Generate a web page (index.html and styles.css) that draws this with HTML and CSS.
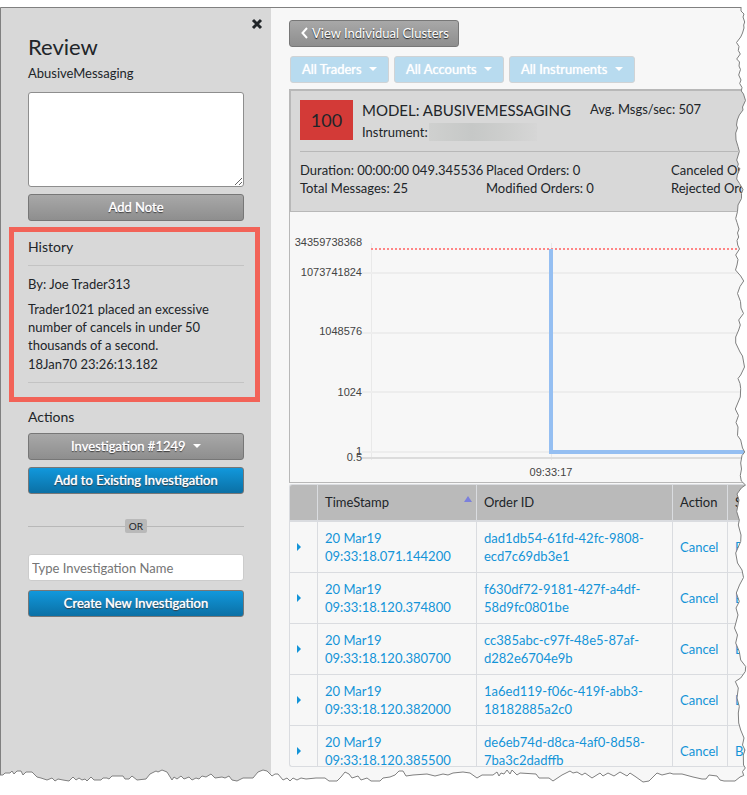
FILE: index.html
```html
<!DOCTYPE html>
<html lang="en">
<head>
<meta charset="utf-8">
<title>Review - AbusiveMessaging</title>
<link rel="stylesheet" href="styles.css">
</head>
<body>

<div class="sheet">

  <aside class="sidebar">
    <button class="close" aria-label="Close">
      <svg width="12" height="12" viewBox="0 0 12 12"><path d="M2 2 10 10M10 2 2 10" stroke="#212529" stroke-width="3"/></svg>
    </button>

    <h1>Review</h1>
    <p class="model-name">AbusiveMessaging</p>
    <textarea class="note" aria-label="Note"></textarea>
    <button class="btn btn-gray btn-block">Add Note</button>

    <section class="history">
      <h2>History</h2>
      <div class="entry">
        <p class="author">By: Joe Trader313</p>
        <p>Trader1021 placed an excessive number of cancels in under 50 thousands of a second.</p>
        <p class="stamp">18Jan70 23:26:13.182</p>
      </div>
    </section>

    <section class="actions">
      <h2>Actions</h2>
      <button class="btn btn-gray btn-block">Investigation #1249 <span class="caret"></span></button>
      <button class="btn btn-blue btn-block">Add to Existing Investigation</button>
      <div class="or"><span>OR</span></div>
      <input class="name-input" type="text" placeholder="Type Investigation Name" aria-label="Investigation name">
      <button class="btn btn-blue btn-block">Create New Investigation</button>
    </section>
  </aside>

  <main class="content">
    <button class="btn btn-gray btn-back">
      <svg width="7" height="12" viewBox="0 0 7 12"><path d="M6 1 1.5 6 6 11" fill="none" stroke="#fff" stroke-width="2"/></svg>
      View Individual Clusters
    </button>

    <div class="filters">
      <button class="btn btn-filter" disabled>All Traders <span class="caret"></span></button>
      <button class="btn btn-filter" disabled>All Accounts <span class="caret"></span></button>
      <button class="btn btn-filter" disabled>All Instruments <span class="caret"></span></button>
    </div>

    <section class="summary">
      <div class="summary-head">
        <div class="score">100</div>
        <div class="model">
          <h2>MODEL: ABUSIVEMESSAGING</h2>
          <p>Instrument:<span class="masked"></span></p>
        </div>
        <p class="rate">Avg. Msgs/sec: 507</p>
      </div>
      <div class="stats">
        <span>Duration: 00:00:00 049.345536</span>
        <span>Placed Orders: 0</span>
        <span>Canceled Orders: 0</span>
        <span>Total Messages: 25</span>
        <span>Modified Orders: 0</span>
        <span>Rejected Orders: 0</span>
      </div>
    </section>

    <div class="chart">
      <svg width="100%" height="270">
        <g class="grid">
          <path d="M81.5 31V248M261.5 31V248"/>
          <line x1="72" y1="61" x2="100%" y2="61"/>
          <line x1="72" y1="121" x2="100%" y2="121"/>
          <line x1="72" y1="180" x2="100%" y2="180"/>
          <line x1="72" y1="240" x2="100%" y2="240"/>
          <line class="axis" x1="72" y1="246" x2="100%" y2="246"/>
        </g>
        <line class="limit" x1="81" y1="37" x2="100%" y2="37"/>
        <line class="series" x1="261" y1="37" x2="261" y2="241"/>
        <line class="series" x1="259" y1="240" x2="100%" y2="240"/>
        <g class="labels">
          <text x="72" y="34">34359738368</text>
          <text x="72" y="64">1073741824</text>
          <text x="72" y="123">1048576</text>
          <text x="72" y="184">1024</text>
          <text x="72" y="243">1</text>
          <text x="72" y="249">0.5</text>
          <text class="time" x="261" y="264">09:33:17</text>
        </g>
      </svg>
    </div>

    <div class="orders">
      <table>
        <colgroup>
          <col class="col-toggle"><col class="col-time"><col class="col-id"><col class="col-action"><col class="col-side">
        </colgroup>
        <thead>
          <tr>
            <th></th>
            <th class="sorted">TimeStamp</th>
            <th>Order ID</th>
            <th>Action</th>
            <th>Side</th>
          </tr>
        </thead>
        <tbody>
          <tr>
            <td><span class="toggle"></span></td>
            <td>20 Mar19 09:33:18.071.144200</td>
            <td>dad1db54-61fd-42fc-9808-<br>ecd7c69db3e1</td>
            <td>Cancel</td>
            <td>Buy</td>
          </tr>
          <tr>
            <td><span class="toggle"></span></td>
            <td>20 Mar19 09:33:18.120.374800</td>
            <td>f630df72-9181-427f-a4df-<br>58d9fc0801be</td>
            <td>Cancel</td>
            <td>Buy</td>
          </tr>
          <tr>
            <td><span class="toggle"></span></td>
            <td>20 Mar19 09:33:18.120.380700</td>
            <td>cc385abc-c97f-48e5-87af-<br>d282e6704e9b</td>
            <td>Cancel</td>
            <td>Buy</td>
          </tr>
          <tr>
            <td><span class="toggle"></span></td>
            <td>20 Mar19 09:33:18.120.382000</td>
            <td>1a6ed119-f06c-419f-abb3-<br>18182885a2c0</td>
            <td>Cancel</td>
            <td>Buy</td>
          </tr>
          <tr>
            <td><span class="toggle"></span></td>
            <td>20 Mar19 09:33:18.120.385500</td>
            <td>de6eb74d-d8ca-4af0-8d58-<br>7ba3c2dadffb</td>
            <td>Cancel</td>
            <td>Buy</td>
          </tr>
        </tbody>
      </table>
    </div>
  </main>

  <!-- torn paper edge, right and bottom -->
  <svg class="torn" viewBox="0 7 747 776" preserveAspectRatio="none" aria-hidden="true">
    <path class="frame" d="M.5 775V7.5H741"/>
    <path class="paper" d="M741 0V11L744 14 743 17 744.7 22 743.7 25 744 28 742.5 33 740.7 37 736.5 42.5 739 46.5 738.3 50.5 740.3 54 736.7 59 739.5 62 739 66 740.5 69.5 738.7 75 741 80 739.7 83.5 742 87.5 741.3 91 743.5 94 745.5 100.5 742.5 107 743 110 739.3 115 737.3 120 736.5 125 737.5 128 735.7 133 736 140 738 146.5 739.3 151.5 736.7 160 738.3 164 737.5 167 740 168.5 737.3 175 736.7 179 739.5 183.5 743 189.5 741.5 193.5 741.5 198.5 738 205 737.5 211.5 735.7 218.5 737 222.5 739 229 737.5 233 738.7 237 737 240.5 737.7 245 739.5 249 735.7 255 738 259.5 737 265 735.5 270 740.7 276 743.7 281 740 286.5 737.5 293.5 740.5 301.5 741 308 743.5 313.5 738.7 320 740.3 325 738.7 330 735.7 337 735.7 343 740 352 742.5 356 744.5 367 740.7 375 738 378.5 740 383.5 740.7 388.5 740.3 397 735.3 409 738.5 415.5 736 422.5 738 427 737.5 435.5 740.7 440 742.5 448 744.7 452 742 455.5 740.7 463 741.5 469 740.3 475.5 741.3 481 745.5 485 741.3 488 737 494 739 500 736.7 511.5 739.3 520 738.3 525 741 535 740.7 541.5 735.7 553 737.5 563 742 570 743.5 577.5 739.5 585 736.3 593 739.3 601.5 736 608 738 615 734.5 628 737.5 635 735.7 643 739.3 651.5 740.7 660 745.7 666.5 745.3 671.5 740.7 678 735.3 681.5 738.3 688 737 698 739.3 706.5 738.3 713 738.7 723 740.7 730 744 738 742.5 745 745 750 743.3 755 743.5 765 745.3 768 742.5 771.5 743.7 775.5 740 777 735 781 724 781 720 780 717 776 709 775 706 779 702 779 693 777 682 774 673 774 670 773 662 775 657 773 649 781 643 782 636 777 630 773 627 776 620 772 614 776 608 773 603 776 600 773 592 778 585 773 582 775 577 772 573 773 570 771 562 775 553 781 549 778 539 778 536 774 520 773 517 775 512 770 510 774 507 770 504 774 501 773 499 776 497 772 493 775 482 775 477 778 470 773 463 772 453 773 448 775 443 774 435 776 427 774 413 775 406 776 403 771 399 771 395 775 390 777 383 778 380 781 371 781 367 778 361 780 358 776 352 778 349 774 345 772 341 777 337 781 329 781 325 778 316 778 306 779 301 778 297 780 293 778 290 781 287 778 283 780 278 774 275 774 272 776 267 771 263 770 258 772 253 778 243 778 237 781 232 780 229 776 225 778 222 777 215 778 211 774 206 777 202 776 199 779 196 778 192 780 189 777 184 779 181 776 177 779 174 777 172 780 167 772 162 770 158 772 156 771 150 774 146 779 137 780 132 776 129 779 125 779 123 776 112 776 109 779 107 778 103 778 101 780 94 780 91 777 87 781 85 779 82 780 79 778 76 780 73 777 69 781 63 780 58 779 55 781 52 778 47 780 41 778 37 777 32 772 26 772 23 775 21 771 17 771 14 774 12 771 10 773 5 773 3 775H-9V799H760V0Z"/>
  </svg>
</div>

</body>
</html>
```

FILE: styles.css
```css
:root {
  --panel: #d8d8d8;
  --page: #f7f7f7;
  --text: #212529;
  --link: #1394d8;
  --line: #b8b8b8;
  --cell-line: #dadce0;
  --highlight: #f26358;
}

* {
  box-sizing: border-box;
}

body {
  margin: 0;
  padding-top: 7px;
  background: #fff;
  color: var(--text);
  font-family: Lato, sans-serif;
  font-size: 13px;
  line-height: 18px;
}

h1, h2, p {
  margin: 0;
  font-weight: 400;
}

button, input, textarea {
  font-family: inherit;
  font-size: 13px;
}

.sheet {
  position: relative;
  display: flex;
  background: var(--page);
  overflow: hidden;
}

.torn {
  position: absolute;
  inset: 0;
  width: 100%;
  height: 100%;
  pointer-events: none;
}

.torn path {
  fill: none;
  stroke: #808080;
}

.torn .paper {
  fill: #fff;
}

/* Sidebar */
.sidebar {
  position: relative;
  flex: 0 0 271px;
  padding: 24px 27px 0 28px;
  background: var(--panel);
}

.close {
  position: absolute;
  top: 9px;
  right: 6px;
  padding: 2px;
  border: 0;
  background: none;
  line-height: 0;
}

h1 {
  font-size: 22px;
  line-height: 32px;
}

h2 {
  font-size: 14px;
}

.model-name {
  margin: 1px 0 10px;
}

.note {
  display: block;
  width: 100%;
  height: 95px;
  margin-bottom: 7px;
  border: 1px solid #8e8e8e;
  border-radius: 3px;
  background: #fff;
}

.btn {
  height: 27px;
  padding: 0 11px 2px;
  border: 1px solid #777;
  border-radius: 3px;
  color: #fff;
  text-shadow: 0 1px 1px #222;
  white-space: nowrap;
}

.btn-block {
  display: block;
  width: 100%;
  margin-bottom: 7px;
  text-shadow: 0 0 1px #fff, 0 1px 1px #222;
}

.btn-gray {
  background: linear-gradient(#a8a8a8, #8e8e8e);
}

.btn-blue {
  background: linear-gradient(#1198dc, #0b70a5);
}

.caret {
  display: inline-block;
  margin-left: 4px;
  border: 4px solid transparent;
  border-top-color: #fff;
  border-bottom: 0;
  vertical-align: 3px;
}

.history {
  margin: -1px -16px 0 -19px;
  padding: 6px 11px 14px 14px;
  border: 5px solid var(--highlight);
}

.entry {
  margin-top: 9px;
  padding: 9px 0;
  border: 1px solid #c3c3c3;
  border-width: 1px 0;
}

.author {
  margin-bottom: 7px;
}

.stamp {
  margin-top: 1px;
}

.actions {
  padding-top: 6px;
}

.actions h2 {
  margin-bottom: 7px;
}

.or {
  display: flex;
  align-items: center;
  height: 14px;
  margin: 25px 0 21px;
  font-size: 10px;
  line-height: 14px;
}

.or::before, .or::after {
  content: "";
  flex: 1;
  height: 1px;
  background: var(--line);
}

.or span {
  padding: 0 4px;
  border-radius: 2px;
  background: #b9b9b9;
}

.name-input {
  display: block;
  width: 100%;
  height: 27px;
  margin-bottom: 9px;
  padding: 0 3px;
  border: 1px solid #ccc;
  border-radius: 3px;
}

.name-input::placeholder {
  color: #757575;
}

/* Main area */
.content {
  flex: 1;
  min-width: 0;
  padding: 13px 0 16px 18px;
  overflow: hidden;
}

.btn-back {
  display: flex;
  align-items: center;
  gap: 4px;
  padding: 0 9px 2px 11px;
}

.filters {
  display: flex;
  gap: 5px;
  margin: 9px 0 6px 1px;
}

.btn-filter {
  border-color: #d0d3d5;
  background: #b8dbef;
  text-shadow: 0 0 1px #fff;
}

.summary {
  height: 123px;
  padding: 9px;
  border: 2px solid var(--line);
  border-width: 2px 0 1px 2px;
  background: var(--panel);
}

.summary-head {
  display: flex;
  align-items: flex-start;
  padding-bottom: 10px;
  border-bottom: 1px solid var(--line);
}

.score {
  width: 53px;
  margin-right: 9px;
  background: #d33a37;
  font-size: 18px;
  line-height: 40px;
  text-align: center;
}

.model {
  width: 228px;
}

.model h2 {
  margin-bottom: 3px;
  font-size: 15px;
  line-height: 20px;
}

.model p {
  display: flex;
}

.masked {
  width: 108px;
  margin-left: 1px;
  background: linear-gradient(90deg, #cfd0cf, #c6c8c7 40%, #cdcecd 70%, #d6d6d6);
}

.stats {
  display: grid;
  grid-template-columns: 186px 185px 186px;
  padding-top: 9px;
  white-space: nowrap;
}

.chart {
  border: 1px solid var(--line);
  border-width: 0 0 1px 1px;
  line-height: 0;
}

.grid {
  stroke: #e9e9e9;
}

.grid line {
  stroke-width: 2;
  stroke: #ededed;
}

.grid .axis {
  stroke: #dcdcdc;
}

.limit {
  stroke: #ff8585;
  stroke-width: 2;
  stroke-dasharray: 2 2;
}

.series {
  stroke: #95bff2;
  stroke-width: 4;
}

.labels {
  fill: #444;
  font-family: "Liberation Sans", sans-serif;
  font-size: 11px;
  text-anchor: end;
}

.labels .time {
  text-anchor: middle;
}

.orders {
  height: 283px;
  margin-top: 1px;
  border: 1px solid var(--cell-line);
  border-right: 0;
  border-radius: 3px 0 0 3px;
  overflow: hidden;
}

table {
  width: 100%;
  min-width: 520px;
  table-layout: fixed;
  border-collapse: separate;
  border-spacing: 0;
}

.col-toggle {
  width: 28px;
}

.col-time {
  width: 159px;
}

.col-id {
  width: 196px;
}

.col-action {
  width: 55px;
}

th, td {
  padding: 7px;
  border-right: 1px solid var(--cell-line);
  border-bottom: 1px solid var(--cell-line);
  font-weight: 400;
  text-align: left;
}

th {
  padding: 8px 7px 9px;
  border-bottom-width: 2px;
  background: #bababa;
}

td {
  color: var(--link);
}

.sorted::after {
  content: "";
  float: right;
  margin: 3px -3px 0 0;
  border: 4px solid transparent;
  border-top: 0;
  border-bottom: 6px solid #7b80dc;
}

.toggle {
  display: block;
  width: 0;
  border: 4px solid transparent;
  border-left-color: var(--link);
  border-right: 0;
}
```
